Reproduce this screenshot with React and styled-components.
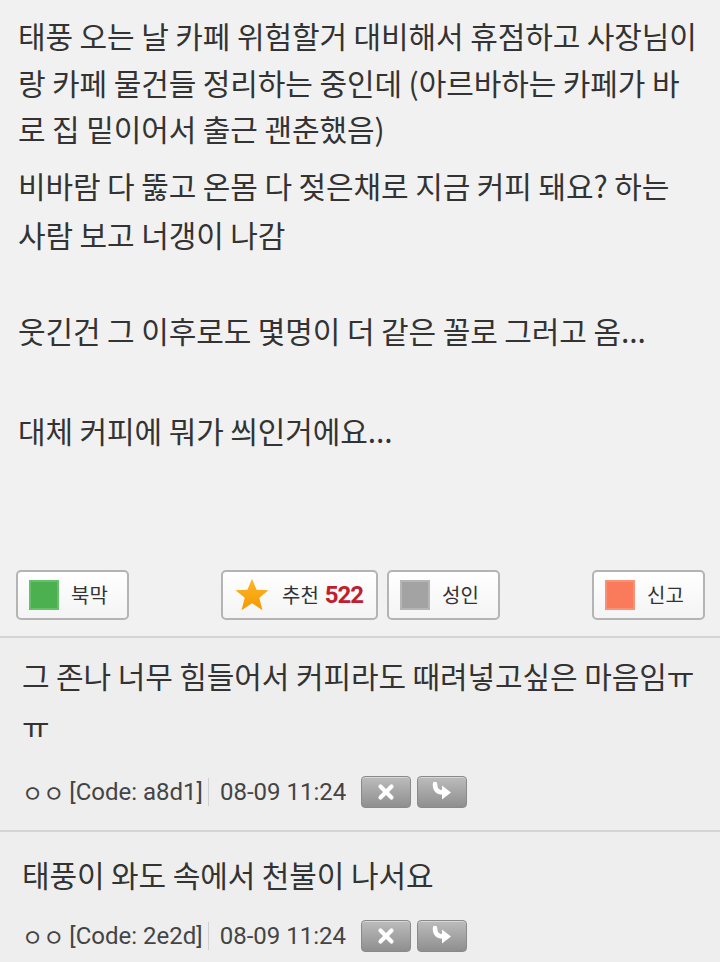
import React from "react";
import styled, { createGlobalStyle } from "styled-components";

const Global = createGlobalStyle`
  html, body { margin: 0; padding: 0; }
  body {
    background: #eeeeee;
    font-family: "Noto Sans CJK KR", "Noto Sans", sans-serif;
    color: #333;
  }
`;

const Page = styled.div`
  width: 720px;
  min-height: 962px;
  background: #eeeeee;
  overflow: hidden;
`;

const Article = styled.section`
  background: #f1f1f1;
  padding: 12px 18px 16px 18px;
`;

const Para = styled.p`
  margin: ${(p) => p.$mt || 0}px 0 0 0;
  font-size: 30px;
  line-height: ${(p) => p.$lh || 47}px;
  color: #333;
  letter-spacing: -0.1px;
  white-space: nowrap;
`;

const ButtonBar = styled.div`
  display: flex;
  justify-content: space-between;
  align-items: center;
  margin: 116px -3px 0 -2px;
`;

const Group = styled.div`
  display: flex;
  gap: 9px;
`;

const VoteButton = styled.button`
  display: flex;
  align-items: center;
  gap: 12px;
  height: 50px;
  width: ${(p) => p.$w || 113}px;
  padding: 0 0 0 11px;
  box-sizing: border-box;
  border: 2px solid #b4b4b4;
  border-radius: 5px;
  background: linear-gradient(#ffffff, #f4f4f4);
  font-family: "Noto Sans CJK KR", sans-serif;
  font-size: 20px;
  color: #333;
  cursor: pointer;
`;

const Swatch = styled.span`
  display: block;
  width: 30px;
  height: 30px;
  background: ${(p) => p.$c};
  box-shadow: inset 0 0 0 2px ${(p) => p.$b};
`;

const Count = styled.span`
  font-family: "Roboto", "Liberation Sans", sans-serif;
  font-weight: 700;
  font-size: 24px;
  letter-spacing: -1px;
  color: #c0202e;
  margin-left: -6px;
`;

const Comment = styled.article`
  border-top: 2px solid #d5d5d5;
  padding: ${(p) => p.$pt || 12}px 22px 18px 22px;
  background: #eeeeee;
`;

const CommentText = styled.p`
  margin: 0;
  font-size: 30px;
  line-height: 50px;
  color: #333;
  letter-spacing: -0.1px;
`;

const Meta = styled.div`
  display: flex;
  align-items: center;
  height: 40px;
  margin-top: ${(p) => p.$mt || 20}px;
  font-family: "Roboto", "Noto Sans CJK KR", sans-serif;
  font-size: 24px;
  color: #444;
`;

const Nick = styled.span`
  font-family: "Noto Sans CJK KR", sans-serif;
  font-size: 23px;
  margin-right: 5px;
`;

const Sep = styled.span`
  display: block;
  width: 1px;
  height: 28px;
  background: #cfcfcf;
  margin: 0 11px 0 5px;
`;

const IconRow = styled.div`
  display: flex;
  gap: 6px;
  margin-left: 15px;
`;

const IconButton = styled.button`
  width: 50px;
  height: 32px;
  padding: 0;
  border: 1px solid #8a8a8a;
  border-radius: 4px;
  background: linear-gradient(#bcbcbc, #8f8f8f);
  display: flex;
  align-items: center;
  justify-content: center;
  box-shadow: inset 0 1px 0 rgba(255,255,255,0.4);
`;

const Star = () => (
  <svg width="36" height="34" viewBox="0 0 24 23">
    <defs>
      <linearGradient id="sg" x1="0" y1="0" x2="0" y2="1">
        <stop offset="0" stopColor="#ffb52a" />
        <stop offset="1" stopColor="#f39a00" />
      </linearGradient>
    </defs>
    <polygon
      points="12,0.5 15.1,8 23.2,8.3 16.9,13.4 19.1,21.8 12,17 4.9,21.8 7.1,13.4 0.8,8.3 8.9,8"
      fill="url(#sg)"
    />
  </svg>
);

const XIcon = () => (
  <svg width="20" height="20" viewBox="0 0 20 20">
    <path d="M4.5 4.5 L15.5 15.5 M15.5 4.5 L4.5 15.5" stroke="#fff" strokeWidth="4.2" strokeLinecap="round" />
  </svg>
);

const ReplyIcon = () => (
  <svg width="24" height="22" viewBox="0 0 24 22">
    <path d="M5 3 C5 9 8 11.5 13 11.5" stroke="#fff" strokeWidth="4.5" fill="none" strokeLinecap="round" />
    <polygon points="12,4.5 21,11.5 12,18.5" fill="#fff" />
  </svg>
);

const comments = [
  { lines: ["그 존나 너무 힘들어서 커피라도 때려넣고싶은 마음임ㅠ", "ㅠ"], code: "a8d1", date: "08-09 11:24", pt: 12, mt: 22 },
  { lines: ["태풍이 와도 속에서 천불이 나서요"], code: "2e2d", date: "08-09 11:24", pt: 17, mt: 17 },
];

export default function App() {
  return (
    <Page>
      <Global />
      <Article>
        <Para $lh={46.5}>
          태풍 오는 날 카페 위험할거 대비해서 휴점하고 사장님이
          <br />
          랑 카페 물건들 정리하는 중인데 (아르바하는 카페가 바
          <br />로 집 밑이어서 출근 괜춘했음)
        </Para>
        <Para $lh={49} $mt={9}>
          비바람 다 뚫고 온몸 다 젖은채로 지금 커피 돼요? 하는
          <br />
          사람 보고 너갱이 나감
        </Para>
        <Para $lh={48} $mt={47}>
          웃긴건 그 이후로도 몇명이 더 같은 꼴로 그러고 옴...
        </Para>
        <Para $lh={48} $mt={52}>
          대체 커피에 뭐가 씌인거에요...
        </Para>
        <ButtonBar>
          <VoteButton>
            <Swatch $c="#4caf50" $b="#66c06a" />
            북막
          </VoteButton>
          <Group>
            <VoteButton $w={157}>
              <Star />
              추천 <Count>522</Count>
            </VoteButton>
            <VoteButton>
              <Swatch $c="#a3a3a3" $b="#b5b5b5" />
              성인
            </VoteButton>
          </Group>
          <VoteButton>
            <Swatch $c="#fa7a5c" $b="#fb9075" />
            신고
          </VoteButton>
        </ButtonBar>
      </Article>
      {comments.map((c) => (
        <Comment key={c.code} $pt={c.pt}>
          <CommentText>
            {c.lines.map((l, i) => (
              <React.Fragment key={i}>
                {i > 0 && <br />}
                {l}
              </React.Fragment>
            ))}
          </CommentText>
          <Meta $mt={c.mt}>
            <Nick>ㅇㅇ</Nick>[Code: {c.code}]
            <Sep />
            {c.date}
            <IconRow>
              <IconButton aria-label="삭제">
                <XIcon />
              </IconButton>
              <IconButton aria-label="답글">
                <ReplyIcon />
              </IconButton>
            </IconRow>
          </Meta>
        </Comment>
      ))}
    </Page>
  );
}
